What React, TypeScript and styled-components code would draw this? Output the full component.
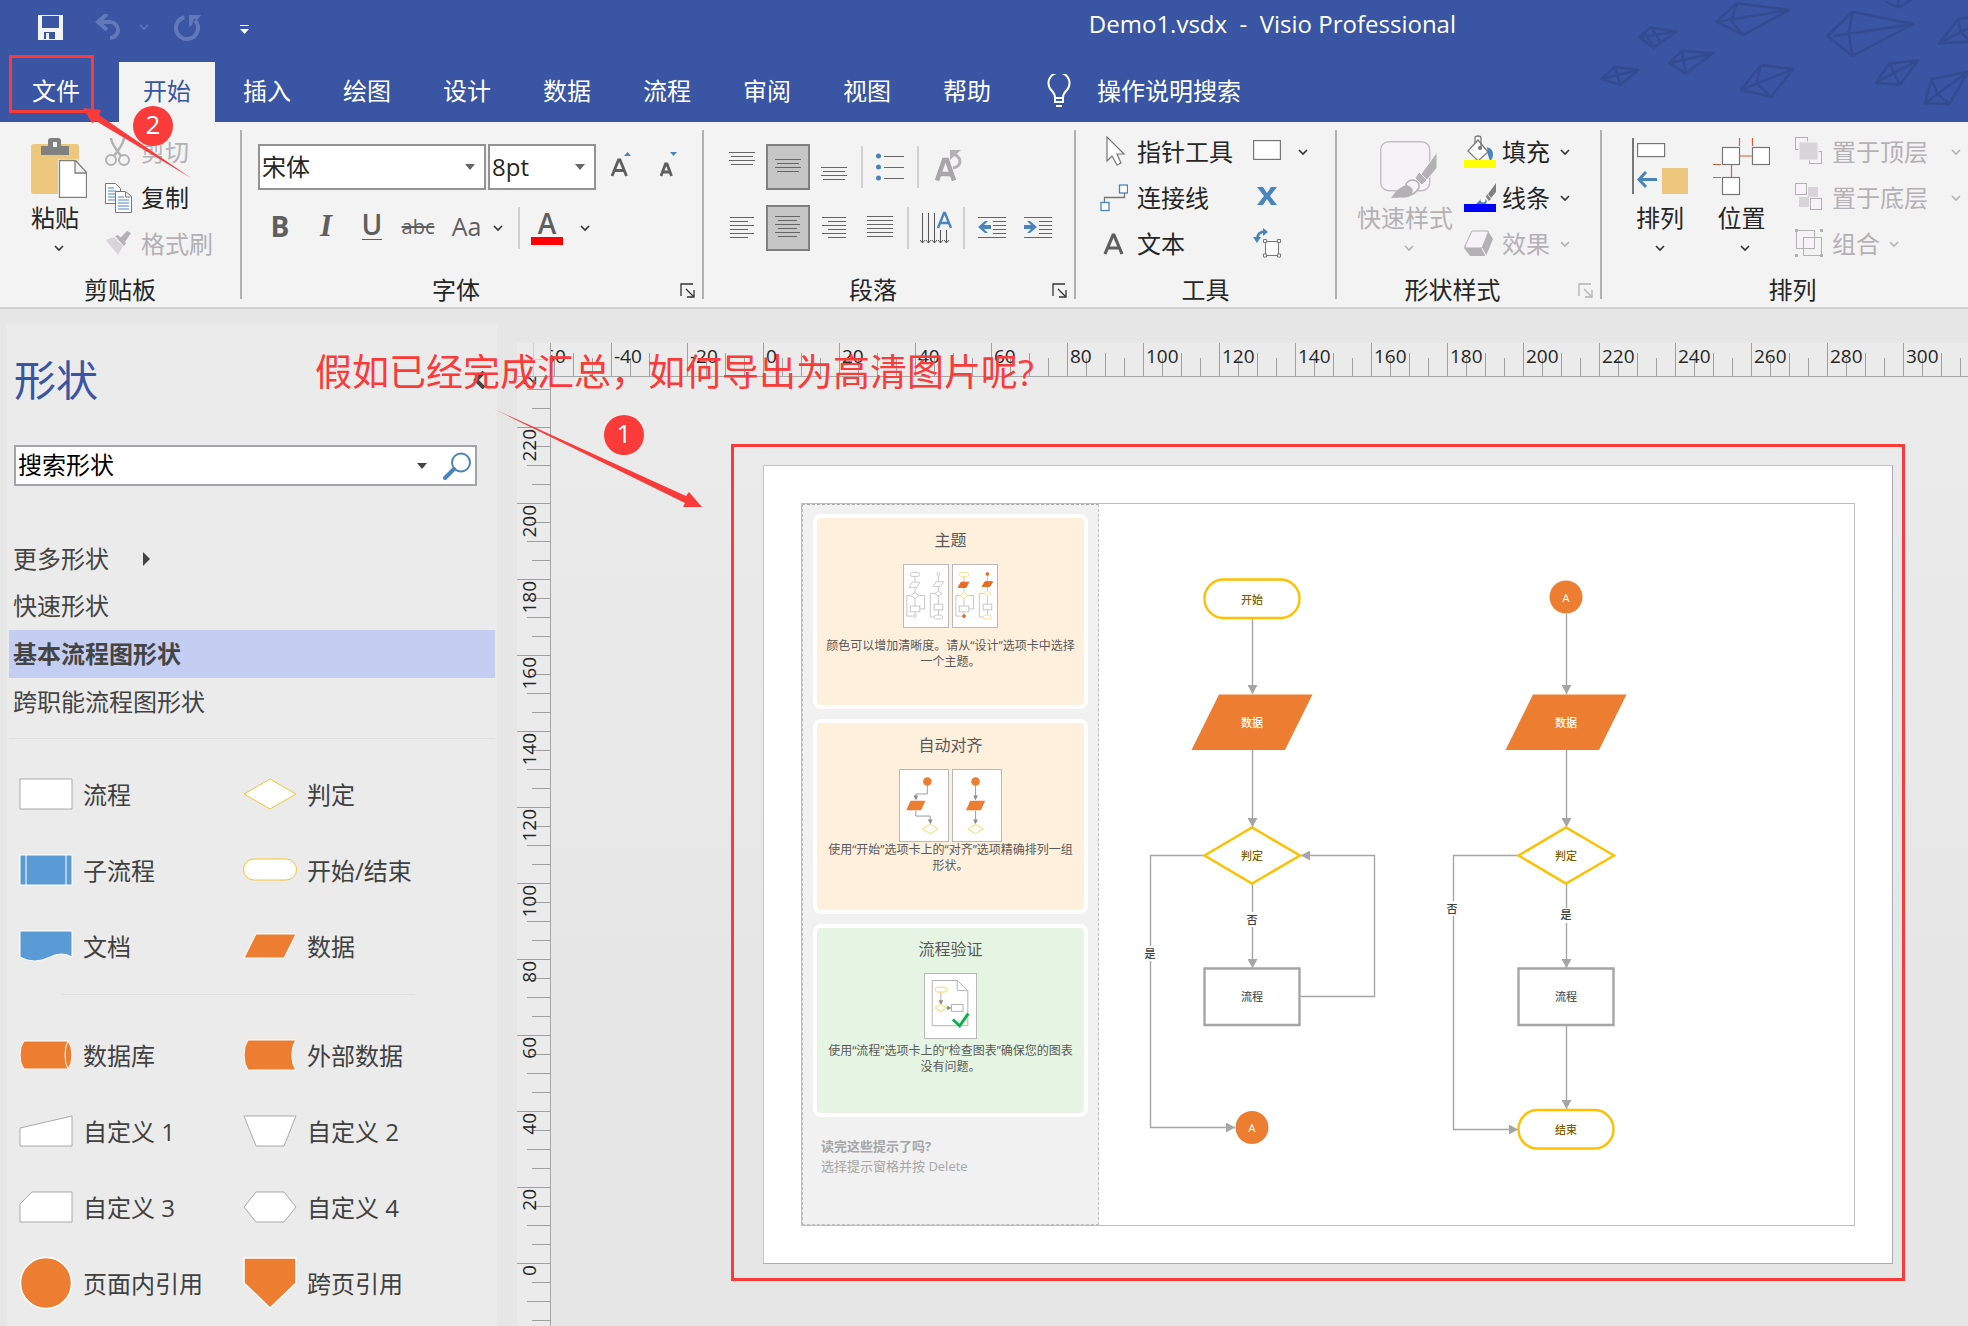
import React from "react";
import styled, { createGlobalStyle, css } from "styled-components";

const c = {
  brand: "#3955a3",
  brandFaded: "#6279b9",
  brandDark: "#334b90",
  ribbon: "#f3f3f3",
  text: "#262626",
  off: "#b3b1b3",
  glyph: "#5e5e5e",
  blue: "#4a84bd",
  orange: "#ed7d31",
  yellow: "#ffc000",
  line: "#a5a5a5",
  mark: "#fb3a3a",
  pale: "#f6f2f8",
};

const GlobalStyle = createGlobalStyle`
  * { box-sizing: border-box; }
  body {
    margin: 0;
    background: #e6e6e6;
    font-family: "Open Sans", "Noto Sans CJK SC", sans-serif;
    font-size: 24px;
    line-height: 32px;
    color: ${c.text};
  }
  button, input, select { font: inherit; color: inherit; }
  button { border: 0; padding: 0; background: none; white-space: nowrap; }
  svg { display: block; flex: none; }
  h1, h2, h3, p { margin: 0; font-weight: 400; }
`;

const Screen = styled.div`
  position: relative;
  height: 100vh;
  overflow: hidden;
  display: flex;
  flex-direction: column;
`;

/* ---------- title bar and tabs ---------- */
const Header = styled.header`
  position: relative;
  flex: none;
  background: ${c.brand};
  color: #fff;
`;
const TitleBar = styled.div`
  height: 62px;
  display: flex;
  align-items: flex-start;
  justify-content: space-between;
  padding-right: 512px;
`;
const QuickAccess = styled.div`
  display: flex;
  align-items: center;
  gap: 25px;
  padding: 12px 0 0 36px;
`;
const Title = styled.h1`
  padding-top: 8px;
  font-size: 24px;
  line-height: 32px;
  white-space: pre;
`;
const QatButton = styled.button`
  display: flex;
  height: 32px;
  align-items: center;
`;
const Tabs = styled.nav`
  display: flex;
  gap: 4px;
  padding-left: 8px;
`;
const Tab = styled.button<{ $active?: boolean; $file?: boolean }>`
  height: 60px;
  padding: 0 24px 2px;
  margin-right: ${(p) => (p.$file ? 11 : 0)}px;
  ${(p) => p.$active && css`background: ${c.ribbon}; color: ${c.brand};`}
`;
const TellMe = styled.button`
  display: flex;
  align-items: center;
  gap: 26px;
  margin-left: 28px;
  padding-bottom: 2px;
`;
const Kites = styled.svg`
  position: absolute;
  right: 0;
  top: 0;
`;

/* ---------- ribbon ---------- */
const Ribbon = styled.div`
  flex: none;
  display: flex;
  background: ${c.ribbon};
  border-bottom: 2px solid #d0d0d0;
  height: 187px;
  overflow: hidden;
`;
const Group = styled.section<{ $w: number }>`
  flex: none;
  width: ${(p) => p.$w}px;
  padding-top: 7px;
  display: flex;
  flex-direction: column;
  gap: 7px;
`;
const GroupBody = styled.div<{ $left: number; $gap?: number }>`
  height: 138px;
  display: flex;
  gap: ${(p) => p.$gap ?? 0}px;
  padding-left: ${(p) => p.$left}px;
`;
const GroupFoot = styled.div`
  display: flex;
  align-items: center;
  height: 32px;
`;
const GroupName = styled.h2`
  flex: 1;
  text-align: center;
  font-size: 24px;
  line-height: 32px;
`;
const LaunchButton = styled.button`
  width: 32px;
  padding-right: 7px;
  display: flex;
  justify-content: flex-end;
`;
const Divider = styled.div`
  flex: none;
  width: 2px;
  height: 169px;
  margin-top: 8px;
  background: #b1b1b1;
`;
const Stack = styled.div`
  display: flex;
  flex-direction: column;
`;
const SmallButton = styled.button<{ $off?: boolean; $gap?: number }>`
  height: 46px;
  display: flex;
  align-items: center;
  gap: ${(p) => p.$gap ?? 9}px;
  color: ${(p) => (p.$off ? c.off : c.text)};
`;
const BigButton = styled.button<{ $off?: boolean }>`
  height: 138px;
  padding-top: 9px;
  display: flex;
  flex-direction: column;
  align-items: center;
  color: ${(p) => (p.$off ? c.off : c.text)};
`;
const BigLabel = styled.span<{ $start?: boolean }>`
  margin: 4px 0 10px;
  align-self: ${(p) => (p.$start ? "flex-start" : "center")};
`;
const Rows = styled.div`
  display: flex;
  flex-direction: column;
  gap: 15px;
  padding-top: 15px;
`;
const Row = styled.div`
  display: flex;
  align-items: center;
  gap: 2px;
  height: 46px;
`;
const Sep = styled.div`
  width: 2px;
  height: 42px;
  margin: 0 3px;
  background: #d0d0d0;
`;
const IconButton = styled.button<{ $on?: boolean; $w?: number }>`
  width: ${(p) => p.$w ?? 44}px;
  height: 46px;
  display: flex;
  align-items: center;
  justify-content: center;
  gap: 12px;
  color: ${c.glyph};
  ${(p) => p.$on && css`background: #c6c6c6; border: 2px solid #808080;`}
`;
const Glyph = styled.span<{ $size: number; $kind?: "bold" | "italic" | "under" | "strike" }>`
  font-size: ${(p) => p.$size}px;
  font-weight: 500;
  line-height: 32px;
  padding-bottom: 4px;
  ${(p) => p.$kind === "bold" && css`font-weight: 700;`}
  ${(p) => p.$kind === "italic" && css`font: italic 700 31px/32px "Liberation Serif", serif;`}
  ${(p) => p.$kind === "under" && css`font-weight: 600; line-height: 28px; padding: 0 0 2px; margin-bottom: 6px; height: 30px; border-bottom: 1px solid ${c.glyph};`}
  ${(p) => p.$kind === "strike" && css`padding-bottom: 2px; text-decoration: line-through;`}
`;
const FontColor = styled.span`
  width: 32px;
  height: 34px;
  font-size: 28px;
  font-weight: 600;
  line-height: 24px;
  border-bottom: 8px solid #f00;
  text-align: center;
`;
const Combo = styled.label<{ $w: number }>`
  position: relative;
  display: flex;
  align-items: center;
  width: ${(p) => p.$w}px;
  height: 46px;
  background: #fff;
  border: 2px solid #939393;
  svg { position: absolute; right: 9px; pointer-events: none; }
`;
const ComboSelect = styled.select`
  appearance: none;
  width: 100%;
  height: 42px;
  border: 0;
  padding: 0 0 0 2px;
  background: transparent;
  outline: 0;
`;

/* ---------- shapes panel ---------- */
const Workspace = styled.main`
  flex: 1;
  min-height: 0;
  display: flex;
  gap: 20px;
  padding: 14px 0 0 7px;
`;
const Panel = styled.aside`
  flex: none;
  width: 490px;
  background: #ebebeb;
  padding: 0 2px;
  overflow: hidden;
`;
const PanelHead = styled.div`
  display: flex;
  align-items: center;
  justify-content: space-between;
  height: 110px;
  padding: 4px 10px 0 5px;
`;
const PanelTitle = styled.h2`
  font-size: 42px;
  line-height: 56px;
  color: ${c.brand};
`;
const SearchBox = styled.label`
  display: flex;
  align-items: center;
  gap: 15px;
  width: 463px;
  height: 41px;
  margin: 12px 0 50px 5px;
  padding: 0 3px 0 2px;
  background: #fff;
  border: 2px solid #a1a4a8;
`;
const SearchInput = styled.input`
  flex: 1;
  min-width: 0;
  border: 0;
  padding: 0 0 1px;
  outline: 0;
  color: #000;
  &::placeholder { color: #000; opacity: 1; }
`;
const StencilRow = styled.button<{ $active?: boolean; $short?: boolean }>`
  width: 100%;
  height: ${(p) => (p.$short ? 46 : 48)}px;
  display: flex;
  align-items: center;
  gap: 34px;
  padding: 0 0 1px 4px;
  color: #444;
  ${(p) => p.$active && css`background: #c3cef2; font-weight: 700;`}
`;
const PanelRule = styled.hr<{ $inset?: boolean }>`
  height: 1px;
  border: 0;
  background: #dfdfdf;
  margin: ${(p) => (p.$inset ? "8px 80px 24px 52px" : "12px 0 19px")};
`;
const ShapeGrid = styled.div`
  display: grid;
  grid-template-columns: 224px 1fr;
  grid-auto-rows: 76px;
  padding-left: 9px;
`;
const ShapeItem = styled.button`
  display: flex;
  align-items: center;
  gap: 9px;
  padding-bottom: 2px;
  color: #404040;
  svg { margin-bottom: 3px; }
`;

/* ---------- drawing area ---------- */
const Drawing = styled.div`
  flex: 1;
  min-width: 0;
  min-height: 0;
  margin-top: 20px;
  display: grid;
  grid-template-columns: 34px minmax(0, 1fr);
  grid-template-rows: 34px minmax(0, 1fr);
`;
const Corner = styled.div`
  grid-area: 1 / 1;
  z-index: 1;
  border: solid #a6a6a6;
  border-width: 0 1px 1px 0;
  background:
    linear-gradient(#cfcfcf, #cfcfcf) 16px 0 / 1px 33px no-repeat,
    linear-gradient(#cfcfcf, #cfcfcf) 0 16px / 33px 1px no-repeat,
    #ebebeb;
`;
const tick = "linear-gradient(#9f9f9f, #9f9f9f)";
const RulerX = styled.div`
  grid-area: 1 / 1 / 2 / 3;
  display: flex;
  overflow: hidden;
  padding-left: 18px;
  background: #ebebeb;
  border-bottom: 1px solid #a6a6a6;
`;
const MarkX = styled.span`
  flex: none;
  width: 76px;
  padding-left: 3px;
  font-size: 19px;
  line-height: 26px;
  background:
    ${tick} 0 0 / 1px 33px no-repeat,
    ${tick} 19px 15px / 1px 18px no-repeat,
    ${tick} 38px 10px / 1px 23px no-repeat,
    ${tick} 57px 15px / 1px 18px no-repeat;
`;
const RulerY = styled.div`
  grid-area: 1 / 1 / 3 / 2;
  overflow: hidden;
  padding-top: 8px;
  background: #ebebeb;
  border-right: 1px solid #a6a6a6;
`;
const MarkY = styled.div`
  height: 76px;
  padding-top: 2px;
  background:
    ${tick} 0 0 / 33px 1px no-repeat,
    ${tick} 15px 19px / 18px 1px no-repeat,
    ${tick} 10px 38px / 23px 1px no-repeat,
    ${tick} 15px 57px / 18px 1px no-repeat;
`;
const MarkYText = styled.span`
  display: block;
  width: 24px;
  font-size: 19px;
  line-height: 24px;
  writing-mode: vertical-rl;
  transform: rotate(180deg);
`;
const Canvas = styled.div`
  grid-area: 2 / 2;
  overflow: hidden;
  padding: 88px 0 0 212px;
  background: linear-gradient(#ebebeb, #e6e6e6 600px);
`;
const Sheet = styled.div`
  width: 1130px;
  height: 799px;
  padding: 37px;
  background: #fff;
  border: 1px solid #c4c5ca;
  border-right-color: #a9abb9;
  border-bottom-color: #a9abb9;
`;
const Margins = styled.div`
  height: 723px;
  width: 1054px;
  display: flex;
  border: 1px solid #bdbdbd;
`;
const Tips = styled.div`
  flex: none;
  width: 297px;
  padding: 9px 10px 0 10px;
  display: flex;
  flex-direction: column;
  gap: 10px;
  background: #f1f1f1;
  border: 1px dashed #bdbdbd;
  border-top-color: #a8a8a8;
  color: #595959;
`;
const TipCard = styled.section<{ $green?: boolean }>`
  height: ${(p) => (p.$green ? 193 : 195)}px;
  padding: ${(p) => (p.$green ? 9 : 10)}px 6px 0;
  border: 4px solid #fff;
  border-radius: 8px;
  background: ${(p) => (p.$green ? "#e6f5e3" : "#fff0de")};
  text-align: center;
`;
const TipTitle = styled.h3`
  font-size: 16px;
  line-height: 24px;
`;
const TipFigure = styled.div<{ $below: number }>`
  display: flex;
  justify-content: center;
  gap: 3px;
  margin: 12px 0 ${(p) => p.$below}px;
`;
const TipText = styled.p`
  font-size: 12px;
  line-height: 16px;
`;
const TipEnd = styled.div`
  padding: 9px 0 0 8px;
  font-size: 13px;
  line-height: 20px;
  color: #a6a6a6;
`;
const Thumb = styled.svg`
  background: #fff;
  border: 1px solid #b9b9b9;
`;
const Node = styled.text<{ $fill: string }>`
  font-size: 11px;
  font-weight: 500;
  fill: ${(p) => p.$fill};
  text-anchor: middle;
  dominant-baseline: central;
`;

/* ---------- annotations over the window ---------- */
const Marks = styled.div`
  position: absolute;
  inset: 0;
  z-index: 2;
  overflow: hidden;
  pointer-events: none;
`;
const MarkBox = styled.div<{ $x: number; $y: number; $w: number; $h: number }>`
  position: absolute;
  left: ${(p) => p.$x}px;
  top: ${(p) => p.$y}px;
  width: ${(p) => p.$w}px;
  height: ${(p) => p.$h}px;
  border: 3px solid ${c.mark};
`;
const MarkDot = styled.span<{ $x: number; $y: number }>`
  position: absolute;
  left: ${(p) => p.$x}px;
  top: ${(p) => p.$y}px;
  width: 40px;
  height: 40px;
  border-radius: 50%;
  background: ${c.mark};
  color: #fff;
  font-size: 26px;
  line-height: 36px;
  text-align: center;
`;
const MarkNote = styled.p`
  position: absolute;
  left: 315px;
  top: 345px;
  font-size: 37px;
  line-height: 54px;
  white-space: nowrap;
  color: ${c.mark};
`;
const MarkArrows = styled.svg`
  position: absolute;
  left: 0;
  top: 0;
`;

/* ---------- icons ---------- */
const Chevron = ({ color = "#333", ml = 0 }: { color?: string; ml?: number }) => (
  <svg width={10 + ml} height="8" viewBox={`${-ml} 0 ${10 + ml} 8`} fill="none" stroke={color} strokeWidth="1.6"><path d="M1 2l4 4 4-4" /></svg>
);
const Caret = ({ color = "#666" }: { color?: string }) => (
  <svg width="10" height="6" viewBox="0 0 10 6" fill={color}><path d="M0 0h10L5 6z" /></svg>
);
const Launcher = ({ color = "#333" }: { color?: string }) => (
  <svg width="15" height="15" viewBox="0 0 15 15" fill="none" stroke={color} strokeWidth="1.3"><path d="M1 13V1h12M6 6l7 7M14 7v7H7" /></svg>
);
const Lines = ({ rows, h = 30 }: { rows: [number, number, number][]; h?: number }) => (
  <svg width="28" height={h} viewBox={`0 0 28 ${h}`} stroke="#666" strokeWidth="1">
    {rows.map(([y, a, b]) => <path key={y} d={`M${a} ${y}.5H${b}`} />)}
  </svg>
);

const PasteIcon = () => (
  <svg width="56" height="60" viewBox="0 0 56 60">
    <rect x="0" y="6" width="48" height="50" rx="3" fill="#edc77d" />
    <path d="M10 8h7V3q0-3 3-3h7q3 0 3 3v5h8v9H10z" fill="#808080" /><rect x="22" y="4" width="4" height="5" fill="#f3f3f3" />
    <path d="M27 21h19l11 12v28H27z" fill="#f3f3f3" />
    <path d="M28.500 22.500h16l11 12v25h-27zM44 23v12h11" fill="#fff" stroke="#808080" strokeWidth="1.3" />
  </svg>
);
const CutIcon = () => (
  <svg width="28" height="30" viewBox="0 0 28 30" fill="none" stroke={c.off} strokeWidth="2">
    <path d="M7 1q0 5 10 18M20 1q0 5-10 18" strokeWidth="2.500" /><circle cx="7" cy="23" r="5" /><circle cx="20" cy="23" r="5" />
  </svg>
);
const CopyIcon = () => (
  <svg width="28" height="30" viewBox="0 0 28 30" fill="#fff" stroke="#777">
    <path d="M1.500.5h10l5 5v15h-15z" /><path d="M4 5h6M4 8h8M4 11h8M4 14h8M4 17h8" stroke={c.blue} />
    <path d="M11.500 8.500h10l6 5v16h-16zM21.500 9v5h5" /><path d="M14 14h6M14 17h11M14 20h11M14 23h11M14 26h11" stroke={c.blue} />
  </svg>
);
const BrushIcon = () => (
  <svg width="28" height="26" viewBox="0 0 28 26">
    <path d="M2 9l8-3 9 9-5 9z" fill="#d9d4d9" /><path d="M11 5l3-1 8 8-2 3zM16 7l7-7 4 2-6 9z" fill={c.off} />
  </svg>
);
const PointerIcon = () => (
  <svg width="28" height="32" viewBox="0 0 28 32"><path d="M7 1v24l5-5 5 9 4-2-4-9h7z" fill="#fff" stroke="#777" strokeWidth="1.2" /></svg>
);
const ConnectorIcon = () => (
  <svg width="28" height="28" viewBox="0 0 28 28" fill="#fff" stroke={c.blue} strokeWidth="1.3">
    <path d="M4.500 18v-4.500h20V9" fill="none" stroke="#777" /><rect x="19.500" y="1" width="8" height="8" /><rect x="1" y="18.500" width="8" height="8" />
  </svg>
);
const TextIcon = () => (
  <svg width="28" height="28" viewBox="0 0 28 28" fill="none" stroke={c.glyph} strokeWidth="3.200"><path d="M5 24L13 5h1l8 19M8.500 18h10" /></svg>
);
const RectIcon = () => (
  <svg width="28" height="26" viewBox="0 0 28 26"><rect x=".6" y="1.600" width="26.800" height="18.800" fill="#fff" stroke="#777" strokeWidth="1.2" /></svg>
);
const CrossIcon = () => (
  <svg width="28" height="26" viewBox="0 0 28 26" fill={c.blue}><path d="M4 2h6l4 6 4-6h6l-7 9 7 9h-6l-4-6-4 6H4l7-9z" /></svg>
);
const TransformIcon = () => (
  <svg width="28" height="32" viewBox="0 0 28 32" fill="none">
    <path d="M4 11q0-7 9-8" stroke={c.blue} strokeWidth="2.500" /><path d="M0 9h8l-4 6zM10 0l5 4-5 4z" fill={c.blue} />
    <rect x="12.500" y="13.500" width="13" height="14" fill="#fff" stroke="#777" />
    <path d="M10.500 11.500h3v3h-3zM24.500 11.500h3v3h-3zM10.500 26h3v3h-3zM24.500 26h3v3h-3z" fill="#fff" stroke="#777" />
  </svg>
);
const QuickStyleIcon = () => (
  <svg width="63" height="60" viewBox="-6 0 63 60">
    <rect x=".7" y="3.700" width="49" height="49" rx="8" fill={c.pale} stroke="#c1bdc1" strokeWidth="1.400" />
    <path d="M57 14v16L47 42l-6-6zM39 34l8 8-5 5-7-7z" fill={c.off} stroke={c.ribbon} />
    <path d="M25 50q1-8 8-8 7 1 6 8-6 9-17 9" fill={c.pale} stroke={c.off} strokeWidth="1.400" />
    <path d="M11 60q8-12 16-13 8 3 5 9-6 4-21 4z" fill={c.off} />
  </svg>
);
const FillIcon = () => (
  <svg width="32" height="34" viewBox="0 0 32 34">
    <path d="M23 12q6 2 6 7t-3 7l-2-6z" fill={c.blue} />
    <path d="M14 5l10 12-10 9L4 16z" fill="#fff" stroke="#777" strokeWidth="1.200" /><path d="M11 8V3q0-2 3-2t3 2v10" fill="none" stroke="#777" strokeWidth="1.300" /><circle cx="16" cy="13" r="2" fill="#777" />
    <path d="M0 25h32v8H0z" fill="#ff0" />
  </svg>
);
const LineIcon = () => (
  <svg width="32" height="30" viewBox="0 0 32 30">
    <path d="M32 0v9l-5 6-3-4zM23 11l4 5-2 2-3-4z" fill="#808080" /><path d="M11 22q3-3 6-6 4-2 6 2-1 4-4 5z" fill={c.blue} /><circle cx="19" cy="17" r="2.500" fill="#fff" />
    <path d="M0 21h32v8H0z" fill="#00f" />
  </svg>
);
const EffectIcon = () => (
  <svg width="32" height="28" viewBox="0 0 32 28">
    <path d="M9 1h15l5 8-7 17H6l-6-8z" fill={c.off} /><path d="M9 1h14q2 0 1 2l-6 15H2q-1 0-1-2L7 3q0-2 2-2z" fill={c.pale} stroke={c.off} /><path d="M18 18l4 8" stroke="#fff" />
  </svg>
);
const AlignIcon = () => (
  <svg width="56" height="60" viewBox="0 0 56 60">
    <path d="M1 0v56" stroke="#777" strokeWidth="2" /><rect x="5.600" y="5.600" width="27" height="13" fill="#fff" stroke="#777" strokeWidth="1.200" />
    <path d="M30 30h26v26H30z" fill="#edc77d" /><path d="M7 41.500h18M14 34l-7 7.500 7 7.500" fill="none" stroke={c.blue} strokeWidth="3" />
  </svg>
);
const PositionIcon = () => (
  <svg width="57" height="60" viewBox="0 0 57 60" fill="#fff" stroke="#777" strokeWidth="1.200">
    <path d="M26.500 0v8M39.500 0v8M27 18h12M18.500 27v12M0 26.500h8M0 39.500h8" stroke="#d9603b" />
    <rect x="9.500" y="9.500" width="17" height="17" /><rect x="39.500" y="9.500" width="17" height="17" /><rect x="9.500" y="39.500" width="17" height="17" />
  </svg>
);
const FrontIcon = () => (
  <svg width="28" height="30" viewBox="0 0 28 30" fill={c.pale} stroke={c.off}><rect x=".5" y=".5" width="12" height="12" /><rect x="14.500" y="14.500" width="12" height="12" /><path d="M4 5h19v18H4z" fill="#d9d4d9" stroke="#f3f3f3" /></svg>
);
const BackIcon = () => (
  <svg width="28" height="30" viewBox="0 0 28 30" fill={c.pale} stroke={c.off}><path d="M13 4h10v10H13zM4 14h10v10H4z" fill="#d9d4d9" stroke="none" /><rect x=".5" y=".5" width="11" height="11" /><rect x="15.500" y="15.500" width="11" height="11" /></svg>
);
const GroupIcon = () => (
  <svg width="28" height="30" viewBox="0 0 28 30" fill="none" stroke={c.off}><rect x="1.500" y="1.500" width="18" height="18" fill={c.pale} /><rect x="8.500" y="8.500" width="18" height="18" /><path d="M0 0h3v3H0zM25 0h3v3h-3zM0 25h3v3H0zM25 25h3v3h-3z" fill={c.off} stroke="none" /></svg>
);
const LetterSize = ({ up }: { up?: boolean }) => (
  <svg width="26" height="30" viewBox="0 0 26 30" fill="none" stroke={c.glyph} strokeWidth="2.800">
    {up ? <path d="M5 24l6.500-16h1.500l6.500 16M7.500 18.500h9.500" /> : <path d="M8 24l4.500-12h1.500l4.500 12M10 20h7" />}
    {up ? <path d="M17 4l3.500-4L24 4z" fill={c.blue} stroke="none" /> : <path d="M17 0h7l-3.500 4z" fill={c.blue} stroke="none" />}
  </svg>
);
const BulletIcon = () => (
  <svg width="28" height="30" viewBox="0 0 28 30">{[4, 15, 26].map((y) => <g key={y}><circle cx="2.500" cy={y} r="2.500" fill={c.blue} /><path d={`M8 ${y}.5h20`} stroke="#666" /></g>)}</svg>
);
const RotateTextIcon = () => (
  <svg width="34" height="34" viewBox="0 0 34 34" fill="none" stroke="#a8a6a8">
    <path d="M8 30.500L15 10h3l7 20.500M11 24h11" strokeWidth="4.500" />
    <path d="M25 4q6 3 6 8-1 5-7 6" stroke={c.off} strokeWidth="3" /><path d="M21 0h11L21 10z" fill={c.off} stroke="none" />
  </svg>
);
const TextDirIcon = () => (
  <svg width="32" height="34" viewBox="0 0 32 34" fill="none" stroke="#555">
    <path d="M2.500 2v30M8.500 2v30M14.500 2v30M20.500 19v13M26.500 19v13" /><path d="M0 29l2.500 3 2.500-3M6 29l2.500 3 2.500-3M12 29l2.500 3 2.500-3M18 29l2.500 3 2.500-3M24 29l2.500 3 2.500-3" />
    <path d="M18 17l6-15h1l6 15M20 12h9" stroke={c.blue} strokeWidth="2.400" />
  </svg>
);
const IndentIcon = ({ out }: { out?: boolean }) => (
  <svg width="28" height="24" viewBox="0 0 28 24"><path d="M0 1.500h28M15 5.500h13M15 9.500h13M15 13.500h13M15 17.500h13M0 21.500h28" stroke="#666" />
    <path d={out ? "M0 11l7-6h3l-4 4h7v4H6l4 4H7z" : "M13 11L6 5H3l4 4H0v4h7l-4 4h3z"} fill={c.blue} /></svg>
);

/* ---------- stencil shapes ---------- */
const stencil: Record<string, React.ReactNode> = {
  流程: <path d="M2 13h52v30H2z" fill="#fff" stroke="#a9a9a9" />,
  判定: <path d="M2 28L28 13l26 15-26 15z" fill="#fff" stroke="#f4c430" />,
  子流程: <><path d="M2 13h52v30H2z" fill="#5b9bd5" stroke="#fff" /><path d="M8 13v30M48 13v30" stroke="#fff" /></>,
  "开始/结束": <rect x="1.500" y="17" width="53" height="21" rx="10.500" fill="#fff" stroke="#f4c430" />,
  文档: <path d="M2 13h52v26q-10-6-22 0-16 8-30 0z" fill="#5b9bd5" stroke="#fff" />,
  数据: <path d="M14 16h40L42 40H2z" fill={c.orange} stroke="#fff" />,
  数据库: <><path d="M6 14h44q4 5 4 14t-4 14H6q-4-5-4-14T6 14z" fill={c.orange} stroke="#fff" /><path d="M50 14q-3 5-3 14t3 14" fill="none" stroke="#fff" /></>,
  外部数据: <path d="M6 13h48q-4 5-4 15t4 15H6q-4-6-4-15t4-15z" fill={c.orange} stroke="#fff" />,
  "自定义 1": <path d="M2 25l52-12v30H2z" fill="#fff" stroke="#a9a9a9" />,
  "自定义 2": <path d="M2 13h52L42 43H14z" fill="#fff" stroke="#a9a9a9" />,
  "自定义 3": <path d="M2 25l12-12h40v30H2z" fill="#fff" stroke="#a9a9a9" />,
  "自定义 4": <path d="M2 28l12-15h28l12 15-12 15H14z" fill="#fff" stroke="#a9a9a9" />,
  页面内引用: <circle cx="28" cy="28" r="25.500" fill={c.orange} stroke="#fff" strokeWidth="1.500" />,
  跨页引用: <path d="M2 3h52v25L28 53 2 28z" fill={c.orange} stroke="#fff" strokeWidth="1.500" />,
};
const basicShapes = ["流程", "判定", "子流程", "开始/结束", "文档", "数据"];
const moreShapes = ["数据库", "外部数据", "自定义 1", "自定义 2", "自定义 3", "自定义 4", "页面内引用", "跨页引用"];

const Shapes = ({ names }: { names: string[] }) => (
  <ShapeGrid>
    {names.map((n) => (
      <ShapeItem key={n}>
        <svg width="56" height="56" viewBox="0 0 56 56">{stencil[n]}</svg>
        {n}
      </ShapeItem>
    ))}
  </ShapeGrid>
);

/* ---------- tip thumbnails ---------- */
const MiniFlow = ({ color }: { color?: boolean }) => {
  const y = color ? "#ffe08a" : "#c9c9c9";
  const o = color ? "#ea6a1f" : "#fff";
  const os = color ? "#ea6a1f" : "#c9c9c9";
  return (
    <Thumb width="46" height="64" viewBox="0 0 46 64" fill="none" stroke="#c4c4c4">
      <path d="M11.500 11v42M7 31.500H3v21.500h6M16 31.500h5.500v14h-5M36 11v42M32 29.500h-4.500V54H32" />
      <rect x="6.500" y="7.500" width="10" height="4" rx="2" stroke={y} fill="#fff" />
      <path d="M8.500 17.500h8l-3 5.500h-8z" fill={o} stroke={os} />
      <path d="M7 31.500l4.500-3 4.500 3-4.500 3z" stroke={y} fill="#fff" />
      <rect x="6.500" y="42.500" width="10" height="6" fill="#fff" />
      <circle cx="11.500" cy="53" r="1.500" fill={o} stroke={os} />
      <circle cx="36" cy="9" r="1.500" fill={o} stroke={os} />
      <path d="M33.500 17h8l-3 5h-8z" fill={o} stroke={os} />
      <path d="M32 29.500l4-2.500 4 2.500-4 2.500z" stroke={y} fill="#fff" />
      <rect x="31.500" y="40.500" width="9" height="6" fill="#fff" />
      <rect x="31.500" y="52" width="9" height="4" rx="2" stroke={y} fill="#fff" />
    </Thumb>
  );
};
const MiniAlign = ({ x1, x2, x3 }: { x1: number; x2: number; x3: number }) => (
  <Thumb width="50" height="73" viewBox="0 0 50 73" fill="none" stroke="#9a9a9a">
    <path d={`M${x1} 14V24.500H${x2}V30M${x2} 42V47.500H${x3}V54`} />
    <path d={`M${x2 - 2.500} 26h5l-2.500 5zM${x3 - 2.500} 51h5l-2.500 5z`} fill="#8c8c8c" stroke="none" />
    <circle cx={x1} cy="11.500" r="4.500" fill={c.orange} stroke="none" />
    <path d={`M${x2 - 5.500} 31.500h15.500l-4.500 10h-15.500z`} fill={c.orange} stroke="none" />
    <path d={`M${x3 - 8} 61l8-5 8 5-8 5z`} fill="#fff" stroke="#ffd757" />
  </Thumb>
);
const MiniCheck = () => (
  <Thumb width="53" height="66" viewBox="0 0 53 66" fill="none" stroke="#b0b0b0">
    <path d="M7.500 6.500h26l11 10.500v36.500h-37zM33.500 7v10h10.500M16.500 19v10M22 35h4" />
    <path d="M14 27h5l-2.500 5zM23 32.500v5l4.500-2.500z" fill="#8c8c8c" stroke="none" />
    <rect x="10.500" y="13.500" width="12" height="5" rx="2.500" stroke="#ffd257" /><path d="M10.500 35l6-4 6 4-6 4z" stroke="#ffd257" fill="#fff" />
    <rect x="27.500" y="31.500" width="12" height="7" /><path d="M29 47l7 6.500L45 41" stroke="#0cb04a" strokeWidth="3" />
  </Thumb>
);

/* ---------- flow chart ---------- */
const Flowchart = () => (
  <svg width="755" height="721" viewBox="1099 504 755 721" fill="none">
    <defs>
      <marker id="tip" markerUnits="userSpaceOnUse" markerWidth="10" markerHeight="10" refX="9" refY="5" orient="auto">
        <path d="M0 0l9 5-9 5z" fill={c.line} />
      </marker>
    </defs>
    <g stroke={c.line} strokeWidth="1.400">
      {[1252.500, 1566.500].map((x) => (
        <g key={x}>
          <path d={`M${x} 614V694`} markerEnd="url(#tip)" />
          <path d={`M${x} 750V827`} markerEnd="url(#tip)" />
          <path d={`M${x} 884V968`} markerEnd="url(#tip)" />
        </g>
      ))}
      <path d="M1566.500 1026V1109" markerEnd="url(#tip)" />
      <path d="M1301 996.500H1374.500V855.500H1301" markerEnd="url(#tip)" />
      <path d="M1204 855.500H1150.500V1127.500H1235" markerEnd="url(#tip)" />
      <path d="M1518 855.500H1453.500V1129.500H1518" markerEnd="url(#tip)" />
    </g>
    {[0, 314].map((dx) => (
      <g key={dx} transform={`translate(${dx} 0)`}>
        <path d="M1219 694.500h93.500l-27.500 55.500h-93.500z" fill={c.orange} />
        <Node x="1252" y="722" $fill="#fff">数据</Node>
        <path d="M1204.500 855.500l47.500-28 48 28-48 28z" fill="#fff" stroke={c.yellow} strokeWidth="2.400" />
        <Node x="1252" y="855" $fill="#7f6000">判定</Node>
        <path d="M1204.500 968.500h95v56.500h-95z" fill="#fff" stroke={c.line} strokeWidth="2.400" />
        <Node x="1252" y="996" $fill="#595959">流程</Node>
      </g>
    ))}
    <rect x="1204.500" y="579.500" width="95" height="38.500" rx="19" fill="#fff" stroke={c.yellow} strokeWidth="2.400" />
    <Node x="1252" y="599" $fill="#7f6000">开始</Node>
    <rect x="1518.500" y="1110" width="95" height="38.500" rx="19" fill="#fff" stroke={c.yellow} strokeWidth="2.400" />
    <Node x="1566" y="1129" $fill="#7f6000">结束</Node>
    <circle cx="1566" cy="597" r="16.500" fill={c.orange} /><Node x="1566" y="597" $fill="#fff">A</Node>
    <circle cx="1252" cy="1127.500" r="16.500" fill={c.orange} /><Node x="1252" y="1127" $fill="#fff">A</Node>
    <path d="M1246 912h12v15h-12zM1144 946h12v15h-12zM1560 908h12v15h-12zM1447 901h12v15h-12z" fill="#fff" />
    <Node x="1252" y="919" $fill="#404040">否</Node>
    <Node x="1150" y="953" $fill="#404040">是</Node>
    <Node x="1566" y="914" $fill="#404040">是</Node>
    <Node x="1452" y="908" $fill="#404040">否</Node>
  </svg>
);

const range = (from: number, to: number, step: number) =>
  Array.from({ length: Math.abs((to - from) / step) + 1 }, (_, i) => from + i * step);

export default function App() {
  return (
    <Screen>
      <GlobalStyle />
      <Header>
        <Kites width="370" height="120" viewBox="700 0 868 360" preserveAspectRatio="none" fill="none" stroke={c.brandDark} strokeWidth="2.500" strokeLinejoin="round">
          {[
            "M797 112L823 82 883 95 830 143zM797 112L883 95M823 82L845 122M810 97L830 143",
            "M978 65L1026 10 1150 30 1040 105zM978 65L1150 30M1026 10L1012 62 1040 105",
            "M867 190L897 152 970 160 906 220zM867 190L970 160M897 152L906 220",
            "M708 237L740 200 795 210 752 255zM708 237L795 210M740 200L752 255",
            "M1035 270L1082 195 1158 207 1106 290zM1035 270L1158 207M1082 195L1072 250 1106 290",
            "M1238 108L1297 35 1440 72 1297 168zM1253 108L1440 72M1297 35L1288 100 1297 168",
            "M1352 248L1384 190 1450 182 1408 255zM1352 248L1450 182M1384 190L1408 255",
            "M1467 310L1482 238 1568 215 1524 312zM1467 310L1568 215M1482 238L1496 280 1524 312",
            "M1568 52L1545 57 1500 130 1568 125M1500 130L1568 85M1545 57L1550 95 1568 118",
            "M1375 5L1405 22 1436 0M1405 22V0",
          ].map((d) => <path key={d} d={d} vectorEffect="non-scaling-stroke" />)}
        </Kites>
        <TitleBar>
          <QuickAccess>
            <QatButton aria-label="保存">
              <svg width="34" height="26" viewBox="0 0 34 26"><path d="M2 0h25v25H2zM6 1h17v12H6zM8 17v7h2v-6h3v6h6v-7z" fill="#f2f2f2" fillRule="evenodd" /></svg>
            </QatButton>
            <QatButton aria-label="撤消">
              <svg width="54" height="28" viewBox="0 0 54 28" fill="none" stroke={c.brandFaded} strokeWidth="4">
                <path d="M12 0L3 8l9 8M3 8h12a8 8 0 0 1 0 16" /><path d="M45 11l4 4 4-4" strokeWidth="1.500" />
              </svg>
            </QatButton>
            <QatButton aria-label="重复">
              <svg width="27" height="28" viewBox="0 0 27 28" fill="none" stroke={c.brandFaded} strokeWidth="4"><path d="M10.500 3.300A11 11 0 1 0 21 6.500" /><path d="M15 1h12l-4 5-3-1-2 6-3 2z" fill={c.brandFaded} stroke="none" /></svg>
            </QatButton>
            <QatButton aria-label="自定义快速访问工具栏">
              <svg width="24" height="6" viewBox="-14 0 24 6" fill="#fff" overflow="visible"><path d="M0 0h9v1H0zM0 4h9L4.500 9z" /></svg>
            </QatButton>
          </QuickAccess>
          <Title>{"Demo1.vsdx  -  Visio Professional"}</Title>
        </TitleBar>
        <Tabs>
          <Tab $file>文件</Tab>
          <Tab $active>开始</Tab>
          {["插入", "绘图", "设计", "数据", "流程", "审阅", "视图", "帮助"].map((t) => <Tab key={t}>{t}</Tab>)}
          <TellMe>
            <svg width="24" height="34" viewBox="0 0 24 34" fill="none" stroke="#fff" strokeWidth="2"><path d="M8 24q0-4-3-7a10.500 10.500 0 1 1 14 0q-3 3-3 7v4H8zM8 24h8M9 32h6" /></svg>
            操作说明搜索
          </TellMe>
        </Tabs>
      </Header>

      <Ribbon>
        <Group $w={240}>
          <GroupBody $left={31} $gap={17}>
            <BigButton><PasteIcon /><BigLabel $start>粘贴</BigLabel><Chevron /></BigButton>
            <Stack>
              <SmallButton $off><CutIcon />剪切</SmallButton>
              <SmallButton><CopyIcon />复制</SmallButton>
              <SmallButton $off><BrushIcon />格式刷</SmallButton>
            </Stack>
          </GroupBody>
          <GroupFoot><GroupName>剪贴板</GroupName></GroupFoot>
        </Group>
        <Divider />
        <Group $w={460}>
          <GroupBody $left={16}>
            <Rows>
              <Row>
                <Combo $w={228}><ComboSelect aria-label="字体"><option>宋体</option></ComboSelect><Caret /></Combo>
                <Combo $w={108}><ComboSelect aria-label="字号"><option>8pt</option></ComboSelect><Caret /></Combo>
                <IconButton aria-label="增大字号"><LetterSize up /></IconButton>
                <IconButton aria-label="减小字号"><LetterSize /></IconButton>
              </Row>
              <Row>
                <IconButton><Glyph $size={28} $kind="bold">B</Glyph></IconButton>
                <IconButton><Glyph $size={28} $kind="italic">I</Glyph></IconButton>
                <IconButton><Glyph $size={28} $kind="under">U</Glyph></IconButton>
                <IconButton><Glyph $size={20} $kind="strike">abc</Glyph></IconButton>
                <IconButton $w={71}><Glyph $size={25}>Aa</Glyph><Chevron /></IconButton>
                <Sep />
                <IconButton><FontColor>A</FontColor></IconButton>
                <IconButton $w={28} aria-label="字体颜色"><Chevron /></IconButton>
              </Row>
            </Rows>
          </GroupBody>
          <GroupFoot><GroupName>字体</GroupName><LaunchButton aria-label="字体设置"><Launcher /></LaunchButton></GroupFoot>
        </Group>
        <Divider />
        <Group $w={370}>
          <GroupBody $left={16}>
            <Rows>
              <Row>
                <IconButton aria-label="顶端对齐"><Lines rows={[[0, 1, 27], [4, 3, 25], [8, 1, 27], [12, 3, 25]]} /></IconButton>
                <IconButton $on aria-label="中部对齐"><Lines rows={[[7, 1, 27], [11, 3, 25], [15, 1, 27], [19, 3, 25]]} /></IconButton>
                <IconButton aria-label="底端对齐"><Lines rows={[[15, 1, 27], [19, 3, 25], [23, 1, 27], [27, 3, 25]]} /></IconButton>
                <Sep />
                <IconButton aria-label="项目符号"><BulletIcon /></IconButton>
                <Sep />
                <IconButton aria-label="旋转文本"><RotateTextIcon /></IconButton>
              </Row>
              <Row>
                <IconButton aria-label="左对齐"><Lines h={22} rows={[[0, 2, 26], [4, 2, 20], [8, 2, 26], [12, 2, 20], [16, 2, 26], [20, 2, 20]]} /></IconButton>
                <IconButton $on aria-label="居中"><Lines h={24} rows={[[0, 1, 26], [4, 4, 23], [8, 1, 26], [12, 4, 23], [16, 1, 26], [20, 4, 23]]} /></IconButton>
                <IconButton aria-label="右对齐"><Lines h={22} rows={[[0, 2, 26], [4, 8, 26], [8, 2, 26], [12, 8, 26], [16, 2, 26], [20, 8, 26]]} /></IconButton>
                <IconButton aria-label="两端对齐"><Lines h={24} rows={[[0, 1, 27], [4, 1, 27], [8, 1, 27], [12, 1, 27], [16, 1, 27], [20, 1, 27]]} /></IconButton>
                <Sep />
                <IconButton aria-label="文字方向"><TextDirIcon /></IconButton>
                <Sep />
                <IconButton aria-label="减少缩进量"><IndentIcon out /></IconButton>
                <IconButton aria-label="增加缩进量"><IndentIcon /></IconButton>
              </Row>
            </Rows>
          </GroupBody>
          <GroupFoot><GroupName>段落</GroupName><LaunchButton aria-label="段落设置"><Launcher /></LaunchButton></GroupFoot>
        </Group>
        <Divider />
        <Group $w={259}>
          <GroupBody $left={24} $gap={20}>
            <Stack>
              <SmallButton><PointerIcon />指针工具</SmallButton>
              <SmallButton><ConnectorIcon />连接线</SmallButton>
              <SmallButton><TextIcon />文本</SmallButton>
            </Stack>
            <Stack>
              <SmallButton $gap={17} aria-label="矩形"><RectIcon /><Chevron /></SmallButton>
              <SmallButton aria-label="连接点"><CrossIcon /></SmallButton>
              <SmallButton aria-label="文本块"><TransformIcon /></SmallButton>
            </Stack>
          </GroupBody>
          <GroupFoot><GroupName>工具</GroupName></GroupFoot>
        </Group>
        <Divider />
        <Group $w={263}>
          <GroupBody $left={20} $gap={11}>
            <BigButton $off><QuickStyleIcon /><BigLabel>快速样式</BigLabel><Chevron ml={8} color={c.off} /></BigButton>
            <Stack>
              <SmallButton $gap={6}><FillIcon />填充<Chevron ml={4} /></SmallButton>
              <SmallButton $gap={6}><LineIcon />线条<Chevron ml={4} /></SmallButton>
              <SmallButton $gap={6} $off><EffectIcon />效果<Chevron ml={4} color={c.off} /></SmallButton>
            </Stack>
          </GroupBody>
          <GroupFoot><GroupName>形状样式</GroupName><LaunchButton aria-label="形状样式设置"><Launcher color={c.off} /></LaunchButton></GroupFoot>
        </Group>
        <Divider />
        <Group $w={381}>
          <GroupBody $left={30} $gap={25}>
            <BigButton><AlignIcon /><BigLabel>排列</BigLabel><Chevron /></BigButton>
            <BigButton><PositionIcon /><BigLabel>位置</BigLabel><Chevron ml={6} /></BigButton>
            <Stack>
              <SmallButton $off><FrontIcon />置于顶层<Chevron ml={14} color={c.off} /></SmallButton>
              <SmallButton $off><BackIcon />置于底层<Chevron ml={14} color={c.off} /></SmallButton>
              <SmallButton $off><GroupIcon />组合<Chevron color={c.off} /></SmallButton>
            </Stack>
          </GroupBody>
          <GroupFoot><GroupName>排列</GroupName></GroupFoot>
        </Group>
      </Ribbon>

      <Workspace>
        <Panel>
          <PanelHead>
            <PanelTitle>形状</PanelTitle>
            <button aria-label="折叠形状窗口">
              <svg width="12" height="18" viewBox="0 0 12 18" fill="none" stroke="#444" strokeWidth="4"><path d="M11 1L3 9l8 8" /></svg>
            </button>
          </PanelHead>
          <SearchBox>
            <SearchInput type="text" placeholder="搜索形状" aria-label="搜索形状" />
            <Caret color="#444" />
            <svg width="30" height="28" viewBox="0 0 30 28" fill="none" stroke={c.blue} strokeWidth="2"><circle cx="19" cy="10.500" r="9" /><path d="M12 17L3 26" strokeWidth="4" strokeLinecap="round" /></svg>
          </SearchBox>
          <StencilRow $short>更多形状<svg width="8" height="14" viewBox="0 0 8 14" fill="#444"><path d="M0 0l7 7-7 7z" /></svg></StencilRow>
          <StencilRow>快速形状</StencilRow>
          <StencilRow $active>基本流程图形状</StencilRow>
          <StencilRow>跨职能流程图形状</StencilRow>
          <PanelRule />
          <Shapes names={basicShapes} />
          <PanelRule $inset />
          <Shapes names={moreShapes} />
        </Panel>

        <Drawing>
          <RulerX>{range(-60, 300, 20).map((n) => <MarkX key={n}>{n}</MarkX>)}</RulerX>
          <RulerY>{range(240, 0, -20).map((n) => <MarkY key={n}><MarkYText>{n}</MarkYText></MarkY>)}</RulerY>
          <Corner />
          <Canvas>
            <Sheet>
              <Margins>
                <Tips>
                  <TipCard>
                    <TipTitle>主题</TipTitle>
                    <TipFigure $below={10}><MiniFlow /><MiniFlow color /></TipFigure>
                    <TipText>颜色可以增加清晰度。请从“设计”选项卡中选择一个主题。</TipText>
                  </TipCard>
                  <TipCard>
                    <TipTitle>自动对齐</TipTitle>
                    <TipFigure $below={0}><MiniAlign x1={28.5} x2={16.5} x3={31.5} /><MiniAlign x1={23.5} x2={23.5} x3={23.5} /></TipFigure>
                    <TipText>使用“开始”选项卡上的“对齐”选项精确排列一组形状。</TipText>
                  </TipCard>
                  <TipCard $green>
                    <TipTitle>流程验证</TipTitle>
                    <TipFigure $below={4}><MiniCheck /></TipFigure>
                    <TipText>使用“流程”选项卡上的“检查图表”确保您的图表没有问题。</TipText>
                  </TipCard>
                  <TipEnd>
                    <b>读完这些提示了吗?</b>
                    <br />
                    选择提示窗格并按 Delete
                  </TipEnd>
                </Tips>
                <Flowchart />
              </Margins>
            </Sheet>
          </Canvas>
        </Drawing>
      </Workspace>

      <Marks>
        <MarkBox $x={9} $y={55} $w={85} $h={58} />
        <MarkBox $x={731} $y={444} $w={1174} $h={837} />
        <MarkArrows width="720" height="520" viewBox="0 0 720 520" fill={c.mark}>
          <path d="M494 409L686 496 689 492 702 507H683L685 503z" />
          <path d="M191 178L99 115 101 110 83 108 92 123 96 121z" />
        </MarkArrows>
        <MarkDot $x={604} $y={415}>1</MarkDot>
        <MarkDot $x={133} $y={106}>2</MarkDot>
        <MarkNote>假如已经完成汇总，如何导出为高清图片呢?</MarkNote>
      </Marks>
    </Screen>
  );
}
